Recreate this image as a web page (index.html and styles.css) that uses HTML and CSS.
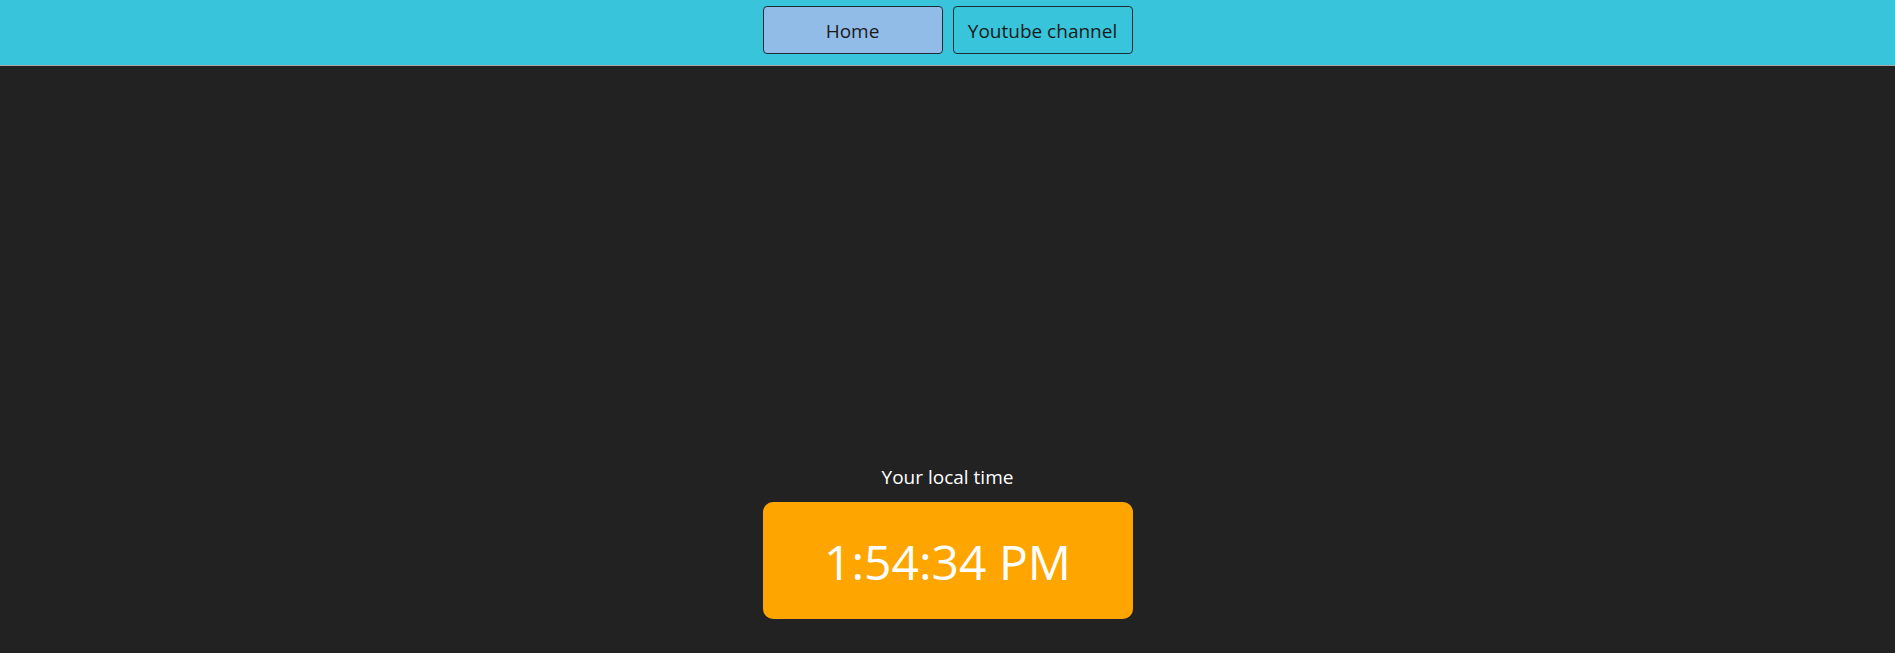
FILE: index.html
```html
<!DOCTYPE html>
<html>
<head>
<meta charset="utf-8">
<link rel="stylesheet" href="styles.css">
</head>
<body>
<header class="topbar">
  <button class="nav-btn active">Home</button>
  <button class="nav-btn">Youtube channel</button>
</header>
<main class="content">
  <div class="label">Your local time</div>
  <div class="clock">1:54:34 PM</div>
</main>
</body>
</html>
```
FILE: styles.css
```css
* { box-sizing: border-box; }
html, body { margin: 0; padding: 0; }
body {
  background: #222222;
  font-family: "Open Sans", "Noto Sans", sans-serif;
  min-height: 653px;
}
.topbar {
  height: 66px;
  background: #38c4da;
  border-bottom: 1px solid #a8a8a8;
  display: flex;
  justify-content: center;
  align-items: flex-start;
  gap: 10px;
  padding-top: 6px;
}
.nav-btn {
  width: 180px;
  height: 48px;
  border: 1px solid #1d2b33;
  border-radius: 4px;
  background: #38c4da;
  color: #1a1a1a;
  font-family: inherit;
  font-size: 19px;
  padding: 2px 0 0;
}
.nav-btn.active { background: #92bce8; }
.content {
  display: flex;
  flex-direction: column;
  align-items: center;
  padding-top: 398px;
}
.label {
  color: #ffffff;
  font-size: 19px;
  line-height: 27px;
  margin-bottom: 11px;
}
.clock {
  width: 370px;
  height: 117px;
  background: #ffa500;
  border-radius: 10px;
  color: #ffffff;
  font-size: 48px;
  padding-top: 2px;
  display: flex;
  align-items: center;
  justify-content: center;
}
```
